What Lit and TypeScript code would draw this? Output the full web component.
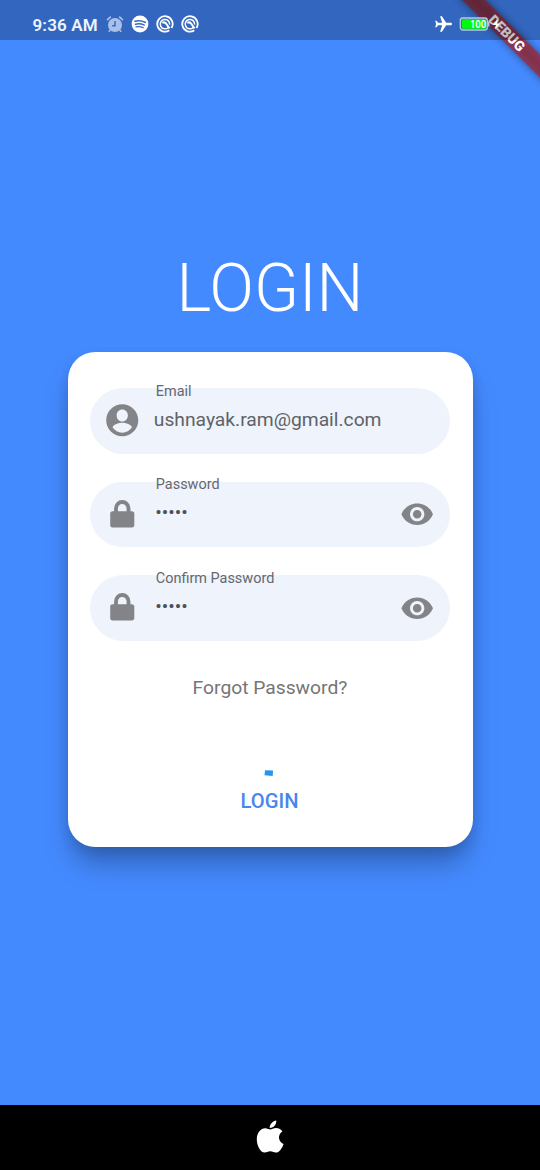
import { LitElement, html, css, svg } from "lit";
import { customElement, property } from "lit/decorators.js";

const accountIcon = svg`<path fill-rule="evenodd" d="M12 2C6.480 2 2 6.480 2 12s4.480 10 10 10 10-4.480 10-10S17.520 2 12 2zm0 3.300c2 0 3.500 1.600 3.500 3.700s-1.500 3.800-3.500 3.800-3.500-1.700-3.500-3.800 1.500-3.700 3.500-3.700zm0 14.500c-2.500 0-4.710-1.280-6-3.220.03-1.990 4-3.080 6-3.080s5.970 1.090 6 3.080c-1.290 1.940-3.500 3.220-6 3.220z"/>`;
const lockIcon = svg`<path fill-rule="evenodd" d="M18.100 10.200H17.100V8.400a5.100 5.300 0 0 0-10.200 0v1.800H5.900c-.8 0-1.400.6-1.400 1.400v7.200c0 .8.6 1.400 1.400 1.400h12.200c.8 0 1.400-.6 1.400-1.400v-7.200c0-.8-.6-1.400-1.400-1.400zM9.300 10.200V8.300a2.700 2.700 0 0 1 5.400 0v1.900z"/>`;
const eyeIcon = svg`<path d="M12 4.500C7 4.500 2.730 7.610 1 12c1.730 4.390 6 7.500 11 7.500s9.270-3.110 11-7.500c-1.730-4.390-6-7.500-11-7.500zM12 17c-2.760 0-5-2.240-5-5s2.240-5 5-5 5 2.240 5 5-2.240 5-5 5zm0-8c-1.660 0-3 1.340-3 3s1.340 3 3 3 3-1.340 3-3-1.340-3-3-3z"/>`;

@customElement("status-bar")
class StatusBar extends LitElement {
  static styles = css`
    :host {
      display: flex;
      align-items: center;
      height: 40px;
      box-sizing: border-box;
      padding: 8.500px 37px 0 32.500px;
      background: rgba(0, 0, 0, 0.25);
      color: #fff;
    }
    .time {
      width: 73.500px;
      padding-top: 1.500px;
      font: 600 17px/20px Roboto, sans-serif;
      letter-spacing: 0.150px;
      white-space: nowrap;
      color: #eef4ff;
    }
    .icons { display: flex; gap: 7px; }
    svg { display: block; }
    .right { display: flex; align-items: center; margin-left: auto; gap: 6px; }
    .pct { font: 600 10px Roboto, sans-serif; }
  `;

  private ring() {
    return html`<svg width="18" height="18" viewBox="0 0 18 18" fill="none" stroke="#fff">
      <path d="M13.300 15.300A7.700 7.700 0 1 1 15.500 13" stroke-width="1.800" />
      <path d="M12.300 12.400A4.700 4.700 0 1 1 13.600 9.600" stroke-width="1.500" />
      <path d="M6.300 7.800C8.600 6.600 9.800 8 10.600 9.300S12.300 11.600 13.600 13.400" stroke-width="2" />
    </svg>`;
  }

  render() {
    return html`
      <span class="time">9:36 AM</span>
      <div class="icons">
        <svg width="18" height="18" viewBox="0 0 18 18">
          <g fill="#a9c1ea">
            <circle cx="9" cy="10" r="7" />
            <path d="M1 5.200 4.800 1.700M13.200 1.700l3.800 3.500M4.300 15l-1.500 1.800M13.700 15l1.500 1.800" stroke="#a9c1ea" stroke-width="1.600" />
          </g>
          <path d="M9 6v4.700H6.200" fill="none" stroke="#3367bf" stroke-width="1.400" />
        </svg>
        <svg width="18" height="18" viewBox="0 0 18 18">
          <circle cx="9" cy="9" r="8.400" fill="#fff" />
          <g fill="none" stroke="#3367bf" stroke-linecap="round">
            <path d="M4 6.300q5-1.500 10.200 1" stroke-width="1.600" />
            <path d="M4.500 9.200q4.500-1.200 8.800.9" stroke-width="1.400" />
            <path d="M5 11.900q3.800-.9 7.300.8" stroke-width="1.200" />
          </g>
        </svg>
        ${this.ring()} ${this.ring()}
      </div>
      <div class="right">
        <svg width="19" height="18" viewBox="0 0 19 18">
          <path fill="#fff" d="M18 9c0-.8-.7-1.300-1.500-1.300h-4.300L7.900 1.200H6.100l2.100 6.500H4.100L2.600 5.700H1.200L2.100 9l-.9 3.300h1.400l1.500-2h4.100l-2.100 6.500h1.800l4.300-6.500h4.300c.8 0 1.500-.5 1.500-1.300z" />
        </svg>
        <svg width="44" height="18" viewBox="0 0 44 18">
          <rect x="1.300" y="3" width="27" height="12" rx="2.500" fill="#4570b5" stroke="#b4c6e6" stroke-width="1.300" />
          <rect x="3" y="4.300" width="24.300" height="9.400" rx="1.500" fill="#00fa0c" />
          <path d="M29 7h1.500v4.500H29z" fill="#b4c6e6" />
          <text class="pct" x="11" y="12.600" fill="#fff" textLength="16" lengthAdjust="spacingAndGlyphs">100</text>
          <path d="M38.500 4 34 10h3l-1 4.500 5-6h-3.200z" fill="#fff" />
        </svg>
      </div>
    `;
  }
}

@customElement("debug-ribbon")
class DebugRibbon extends LitElement {
  static styles = css`
    :host { display: block; }
    svg { display: block; }
    .shade { filter: drop-shadow(0 0 4px rgba(0, 0, 0, 0.65)); }
    .word { font: 900 14px Roboto, sans-serif; }
  `;
  render() {
    return html`<svg width="100" height="100" viewBox="0 0 100 100">
      <g transform="translate(100 0) rotate(45)">
        <rect class="shade" x="-65" y="38.500" width="130" height="16.500" fill="#b71c1c" fill-opacity="0.630" />
        <text class="word" x="0" y="51.700" text-anchor="middle" fill="#fff">DEBUG</text>
      </g>
    </svg>`;
  }
}

@customElement("login-field")
class LoginField extends LitElement {
  static styles = css`
    :host {
      display: grid;
      grid-template-columns: 65px 1fr 66px;
      height: 65.500px;
      border-radius: 33px;
      background: #eef3fc;
      color: #5d6066;
    }
    .icon { display: flex; align-items: center; justify-content: center; }
    svg { display: block; width: 38.500px; height: 38.500px; fill: #838488; }
    .eye { width: 34.400px; height: 34.400px; }
    .lead { width: 38.500px; margin-top: -1px; }
    .body { display: flex; flex-direction: column; margin-top: -5.500px; padding-left: 1px; }
    .label {
      font: 400 14.440px/17px Roboto, sans-serif;
      white-space: nowrap;
      color: #66686c;
    }
    .value {
      margin-top: 8px;
      margin-left: -2px;
      font: 400 19.250px/24px Roboto, sans-serif;
      white-space: nowrap;
      color: #606268;
    }
    .secret { margin-left: -0.500px; margin-top: 8px; color: #4e5056; }
  `;
  @property() label = "";
  @property() value = "";
  @property({ type: Boolean }) secret = false;

  render() {
    return html`
      <div class="icon">
        <svg class="lead" viewBox="0 0 24 24">${this.secret ? lockIcon : accountIcon}</svg>
      </div>
      <div class="body">
        <span class="label">${this.label}</span>
        <span class="value ${this.secret ? "secret" : ""}">${this.value}</span>
      </div>
      <div class="icon">
        ${this.secret ? html`<svg class="eye" viewBox="0 0 24 24">${eyeIcon}</svg>` : ""}
      </div>
    `;
  }
}

@customElement("app-root")
class AppRoot extends LitElement {
  static styles = css`
    :host {
      display: flex;
      flex-direction: column;
      position: relative;
      width: 540px;
      height: 1170px;
      overflow: hidden;
      background: #448aff;
      font-family: Roboto, sans-serif;
    }
    .ribbon { position: absolute; top: 0; right: 0; }
    status-bar { position: relative; z-index: 1; }
    main {
      flex: 1;
      display: flex;
      flex-direction: column;
      align-items: center;
      padding-top: 210px;
    }
    h1 {
      margin: 0;
      font: 300 66px/77px Roboto, sans-serif;
      color: #fff;
    }
    .card {
      display: flex;
      flex-direction: column;
      box-sizing: border-box;
      width: 405px;
      height: 495.500px;
      margin-top: 24.500px;
      padding: 36.500px 22.300px 0;
      border-radius: 27.500px;
      background: #fff;
      box-shadow: 0 20px 28px -4px rgba(0, 0, 0, 0.28), 0 5px 12px rgba(0, 0, 0, 0.1);
    }
    .fields { display: flex; flex-direction: column; gap: 28px; }
    .forgot {
      margin-top: 35.500px;
      text-align: center;
      font-size: 19.250px;
      line-height: 23px;
      color: #757575;
    }
    .spinner { display: block; align-self: center; margin: 71px 2px 0 0; }
    .submit {
      margin-top: 12.500px;
      padding-right: 1px;
      text-align: center;
      font-size: 20.200px;
      font-weight: 500;
      line-height: 23px;
      color: #4787ef;
    }
    .nav {
      display: flex;
      justify-content: center;
      height: 65px;
      background: #000;
    }
    .nav svg { display: block; margin-top: 15px; }
  `;

  render() {
    return html`
      <status-bar></status-bar>
      <main>
        <h1>LOGIN</h1>
        <section class="card">
          <div class="fields">
            <login-field label="Email" value="ushnayak.ram@gmail.com"></login-field>
            <login-field label="Password" value="•••••" secret></login-field>
            <login-field label="Confirm Password" value="•••••" secret></login-field>
          </div>
          <div class="forgot">Forgot Password?</div>
          <svg class="spinner" width="10" height="7" viewBox="0 0 10 7">
            <path d="M1 .2 9 .6 8.700 6 .5 5.200z" fill="#2196f3" />
          </svg>
          <div class="submit">LOGIN</div>
        </section>
      </main>
      <footer class="nav">
        <svg width="28" height="34" viewBox="0 0 28 34" fill="#fff">
          <path d="M20.300.5c.2 4.200-3 7.600-6.600 7.400C13.500 4.300 17 .8 20.300.5z" />
          <path d="M14.300 9.600c1.300 0 3.200-1.500 5.900-1.500 2.600 0 4.900 1.300 6.200 3.300-5.100 3-4.300 10.300 1.200 12.500-1.500 4.200-4.400 8.700-7.700 8.700-2.100 0-3-1.300-5.600-1.300s-3.600 1.300-5.600 1.300C4.300 32.600.8 25.800.8 19.300.8 12.500 5 8.300 9.100 8.300c2.300 0 3.800 1.300 5.200 1.300z" />
        </svg>
      </footer>
      <debug-ribbon class="ribbon"></debug-ribbon>
    `;
  }
}
